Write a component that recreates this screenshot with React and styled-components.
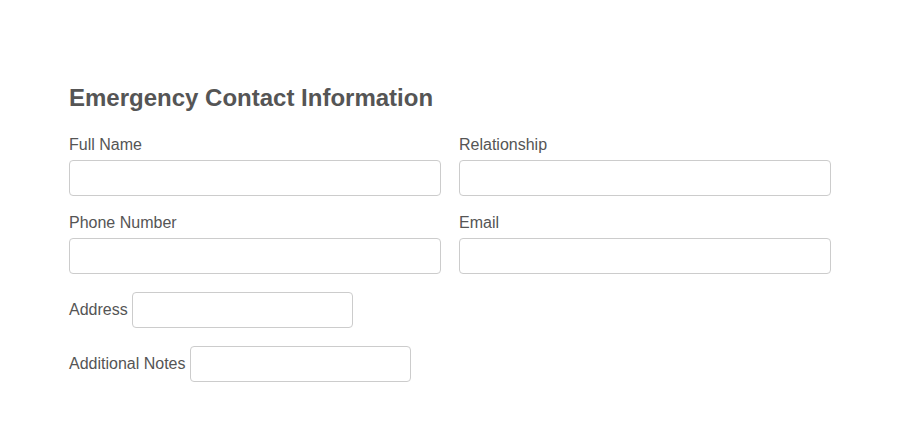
import React from "react";
import styled, { createGlobalStyle } from "styled-components";

const Global = createGlobalStyle`
  html, body { margin: 0; padding: 0; background: #fff; }
  body { font-family: "Liberation Sans", Arial, sans-serif; color: #555; }
  * { box-sizing: border-box; }
`;

const Page = styled.div`
  width: 900px;
  padding: 84px 69px 0;
`;

const Title = styled.h2`
  margin: 0 0 22px;
  font-size: 24px;
  line-height: 28px;
  font-weight: bold;
  color: #555;
`;

const Grid = styled.div`
  display: grid;
  grid-template-columns: 372px 372px;
  column-gap: 18px;
  row-gap: 16px;
`;

const Field = styled.div`
  display: flex;
  flex-direction: column;
`;

const Label = styled.label`
  font-size: 16px;
  line-height: 20px;
  color: #555;
  padding-top: 1px;
  margin-bottom: 5px;
`;

const Input = styled.input`
  display: block;
  width: ${(p) => p.$w || "100%"};
  height: 36px;
  border: 1px solid #ccc;
  border-radius: 4px;
  background: #fff;
  padding: 6px 12px;
  font: inherit;
  outline: none;
`;

const InlineRow = styled.div`
  display: flex;
  align-items: center;
  gap: 4px;
  margin-top: 18px;
`;

const InlineLabel = styled.label`
  font-size: 16px;
  line-height: 20px;
  color: #555;
`;

export default function App() {
  return (
    <>
      <Global />
      <Page>
        <Title>Emergency Contact Information</Title>
        <Grid>
          <Field>
            <Label>Full Name</Label>
            <Input type="text" />
          </Field>
          <Field>
            <Label>Relationship</Label>
            <Input type="text" />
          </Field>
          <Field>
            <Label>Phone Number</Label>
            <Input type="text" />
          </Field>
          <Field>
            <Label>Email</Label>
            <Input type="text" />
          </Field>
        </Grid>
        <InlineRow>
          <InlineLabel>Address</InlineLabel>
          <Input type="text" $w="221px" />
        </InlineRow>
        <InlineRow>
          <InlineLabel>Additional Notes</InlineLabel>
          <Input type="text" $w="221px" />
        </InlineRow>
      </Page>
    </>
  );
}
